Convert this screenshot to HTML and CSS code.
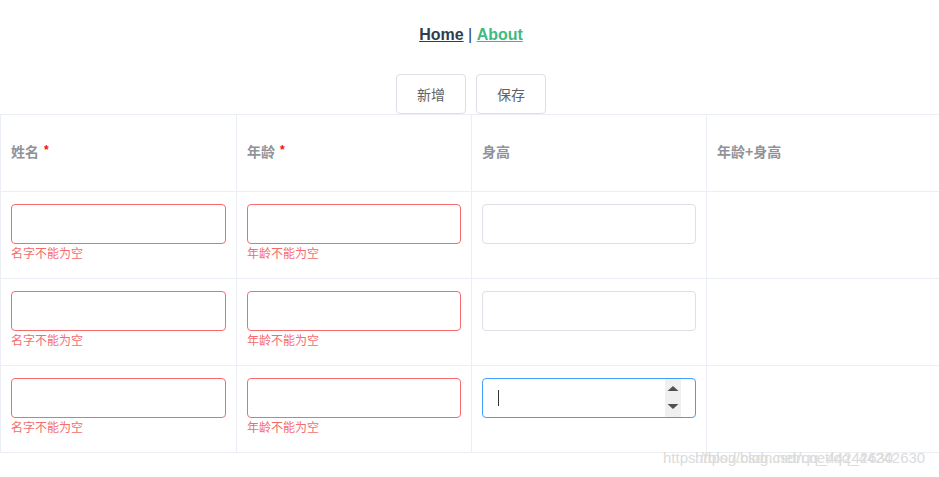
FILE: index.html
```html
<!DOCTYPE html>
<html lang="zh-CN">
<head>
<meta charset="utf-8">
<title>Table</title>
<link rel="stylesheet" href="styles.css">
</head>
<body>
<div class="app">
  <nav class="nav"><a class="link home" href="#">Home</a> <span class="sep">|</span> <a class="link about" href="#">About</a></nav>
  <div class="toolbar">
    <button class="btn">新增</button>
    <button class="btn">保存</button>
  </div>
  <div class="table-wrap">
    <table class="grid">
      <colgroup><col class="c1"><col class="c"><col class="c"><col class="c"></colgroup>
      <thead>
        <tr>
          <th><span class="th">姓名<span class="req">*</span></span></th>
          <th><span class="th">年龄<span class="req">*</span></span></th>
          <th><span class="th">身高</span></th>
          <th><span class="th">年龄+身高</span></th>
        </tr>
      </thead>
      <tbody>
        <tr>
          <td><div class="item"><input class="inp err" type="text"><div class="msg">名字不能为空</div></div></td>
          <td><div class="item"><input class="inp err" type="text"><div class="msg">年龄不能为空</div></div></td>
          <td><div class="item"><input class="inp" type="text"></div></td>
          <td></td>
        </tr>
        <tr>
          <td><div class="item"><input class="inp err" type="text"><div class="msg">名字不能为空</div></div></td>
          <td><div class="item"><input class="inp err" type="text"><div class="msg">年龄不能为空</div></div></td>
          <td><div class="item"><input class="inp" type="text"></div></td>
          <td></td>
        </tr>
        <tr>
          <td><div class="item"><input class="inp err" type="text"><div class="msg">名字不能为空</div></div></td>
          <td><div class="item"><input class="inp err" type="text"><div class="msg">年龄不能为空</div></div></td>
          <td><div class="item focus-wrap"><div class="inp focus"></div><span class="caret"></span><span class="spin"><svg width="16" height="38" viewBox="0 0 16 38"><path d="M2.5 12 L8 7 L13.5 12 Z" fill="#505050"/><path d="M2.5 25 L13.5 25 L8 30 Z" fill="#505050"/></svg></span></div></td>
          <td></td>
        </tr>
      </tbody>
    </table>
  </div>
  <div class="wm"><span class="w1">https://blog.csdn.net/qq_44242630</span><span class="w2">https://blog.csdn.net/qq_44242630</span></div>
</div>
</body>
</html>
```

FILE: styles.css
```css
html, body {
  margin: 0;
  padding: 0;
  background: #fff;
}
body {
  overflow: hidden;
  font-family: "Liberation Sans", Arial, "Noto Sans CJK SC", sans-serif;
  color: #2c3e50;
}
.app {
  position: relative;
  width: 939px;
  height: 477px;
}
.nav {
  padding: 26px 0 30px 3px;
  text-align: center;
  font-size: 16px;
  line-height: 18px;
  color: #2c3e50;
}
.link { text-decoration: underline; font-weight: bold; }
.home { color: #2c3e50; }
.about { color: #42b983; }
.sep { font-weight: normal; color: #2c3e50; }
.toolbar {
  display: flex;
  justify-content: center;
  gap: 10px;
  padding-left: 3px;
}
.btn {
  height: 40px;
  width: 70px;
  padding: 0 0 1px;
  background: #fff;
  border: 1px solid #dcdfe6;
  border-radius: 4px;
  color: #606266;
  font-size: 14px;
  font-family: "Noto Sans CJK SC", sans-serif;
}
.table-wrap {
  width: 939px;
  overflow: hidden;
}
.grid {
  width: 942px;
  table-layout: fixed;
  border-collapse: separate;
  border-spacing: 0;
  border-top: 1px solid #ebeef5;
  border-left: 1px solid #ebeef5;
}
.c1 { width: 236px; }
.c { width: 235px; }
th, td {
  border-right: 1px solid #ebeef5;
  border-bottom: 1px solid #ebeef5;
  padding: 0 10px;
  text-align: left;
  vertical-align: top;
}
th {
  height: 76px;
  vertical-align: middle;
  font-size: 14px;
  font-weight: bold;
  color: #909399;
  font-family: "Noto Sans CJK SC", sans-serif;
}
.th { position: relative; top: -2px; }
.req {
  color: #f01010;
  font-family: "Liberation Sans", sans-serif;
  font-size: 12px;
  font-weight: bold;
  margin-left: 5px;
  position: relative;
  top: -3px;
}
td {
  height: 86px;
  padding-top: 12px;
  padding-bottom: 12px;
  box-sizing: border-box;
}
.item {
  position: relative;
  margin-bottom: 22px;
  height: 40px;
}
.inp {
  display: block;
  box-sizing: border-box;
  width: 100%;
  height: 40px;
  margin: 0;
  padding: 0 15px;
  border: 1px solid #dcdfe6;
  border-radius: 4px;
  background: #fff;
  outline: none;
}
.inp.err { border-color: #f56c6c; }
.inp.focus { border-color: #409eff; }
.msg {
  position: absolute;
  left: 0;
  top: 100%;
  padding-top: 2px;
  font-size: 12px;
  line-height: 14px;
  color: #f56c6c;
  font-family: "Noto Sans CJK SC", sans-serif;
}
.caret {
  position: absolute;
  left: 16px;
  top: 12px;
  width: 1px;
  height: 16px;
  background: #333;
}
.spin {
  position: absolute;
  right: 15px;
  top: 1px;
  width: 16px;
  height: 38px;
  background: #f0f0f0;
}
.spin svg { display: block; }
.wm {
  position: absolute;
  left: 663px;
  top: 449px;
  width: 276px;
  height: 18px;
  font-size: 15px;
  color: #d8d8d8;
  opacity: 0.9;
}
.w1, .w2 {
  position: absolute;
  top: 0;
  white-space: nowrap;
}
.w1 { left: 0; }
.w2 { left: 32px; }
```
